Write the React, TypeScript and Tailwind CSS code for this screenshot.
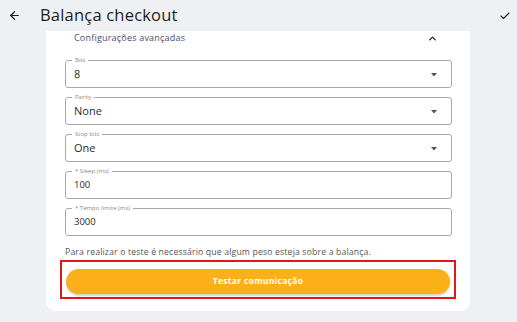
import React from 'react';
import { ArrowLeft, Check, ChevronUp } from 'lucide-react';

const fields = [
  { label: 'Bits', value: '8', select: true },
  { label: 'Parity', value: 'None', select: true },
  { label: 'Stop bits', value: 'One', select: true },
  { label: '* Sleep (ms)', value: '100', select: false },
  { label: '* Tempo limite (ms)', value: '3000', select: false },
];

const Field = ({ label, value, select }: { label: string; value: string; select: boolean }) => (
  <div className="relative h-[28px] rounded-[3px] border border-[#a9a9a9] flex items-center pl-[8px] pr-[14px]">
    <span className="absolute -top-[5px] left-[6px] bg-white px-[3px] text-[6px] leading-[8px] text-[#8a8a8a]">
      {label}
    </span>
    <span className={select ? 'flex-1 text-[11px] text-[#2a2a2a]' : 'flex-1 text-[9.5px] text-[#2a2a2a]'}>{value}</span>
    {select && (
      <svg width="6" height="4" viewBox="0 0 6 4" className="mt-[1px]">
        <path d="M0 0 L6 0 L3 3.5 Z" fill="#555" />
      </svg>
    )}
  </div>
);

export default function App() {
  return (
    <div className="w-[517px] h-[322px] bg-[#eff0f4] flex flex-col overflow-hidden" style={{ fontFamily: '"Open Sans", "Noto Sans", sans-serif' }}>
      <div className="h-[31px] flex items-center pl-[8px] pr-[6px]">
        <ArrowLeft size={13} strokeWidth={2.2} className="text-[#222]" />
        <span className="ml-[19px] text-[16.5px] font-medium text-[#1d1d1d] tracking-[0.2px]">Balança checkout</span>
        <Check size={12} strokeWidth={2.2} className="ml-auto text-[#222]" />
      </div>
      <div className="mx-[46px] w-[424px] bg-white rounded-b-[9px] px-[18px] pb-[12px] flex flex-col">
        <div className="h-[14px] flex items-center pl-[10px] pr-[14px]">
          <span className="flex-1 text-[9px] text-[#4a4d73] tracking-[0.2px]">Configurações avançadas</span>
          <ChevronUp size={11} strokeWidth={3} className="text-[#222]" />
        </div>
        <div className="mt-[15px] flex flex-col gap-[9px] ml-[1px]">
          {fields.map((f) => (
            <Field key={f.label} {...f} />
          ))}
        </div>
        <p className="mt-[10px] ml-[1px] text-[8.7px] text-[#555] tracking-[0.15px]">
          Para realizar o teste é necessário que algum peso esteja sobre a balança.
        </p>
        <div className="mt-[1px] -mx-[4px] border-2 border-[#e8141c] px-[4px] pt-[4px] pb-[3px]">
          <button className="w-full h-[25px] rounded-full bg-[#fbb017] shadow-[0_2px_2px_rgba(0,0,0,0.18)] text-white text-[8.5px] font-bold tracking-[0.3px]">
            Testar comunicação
          </button>
        </div>
      </div>
    </div>
  );
}
